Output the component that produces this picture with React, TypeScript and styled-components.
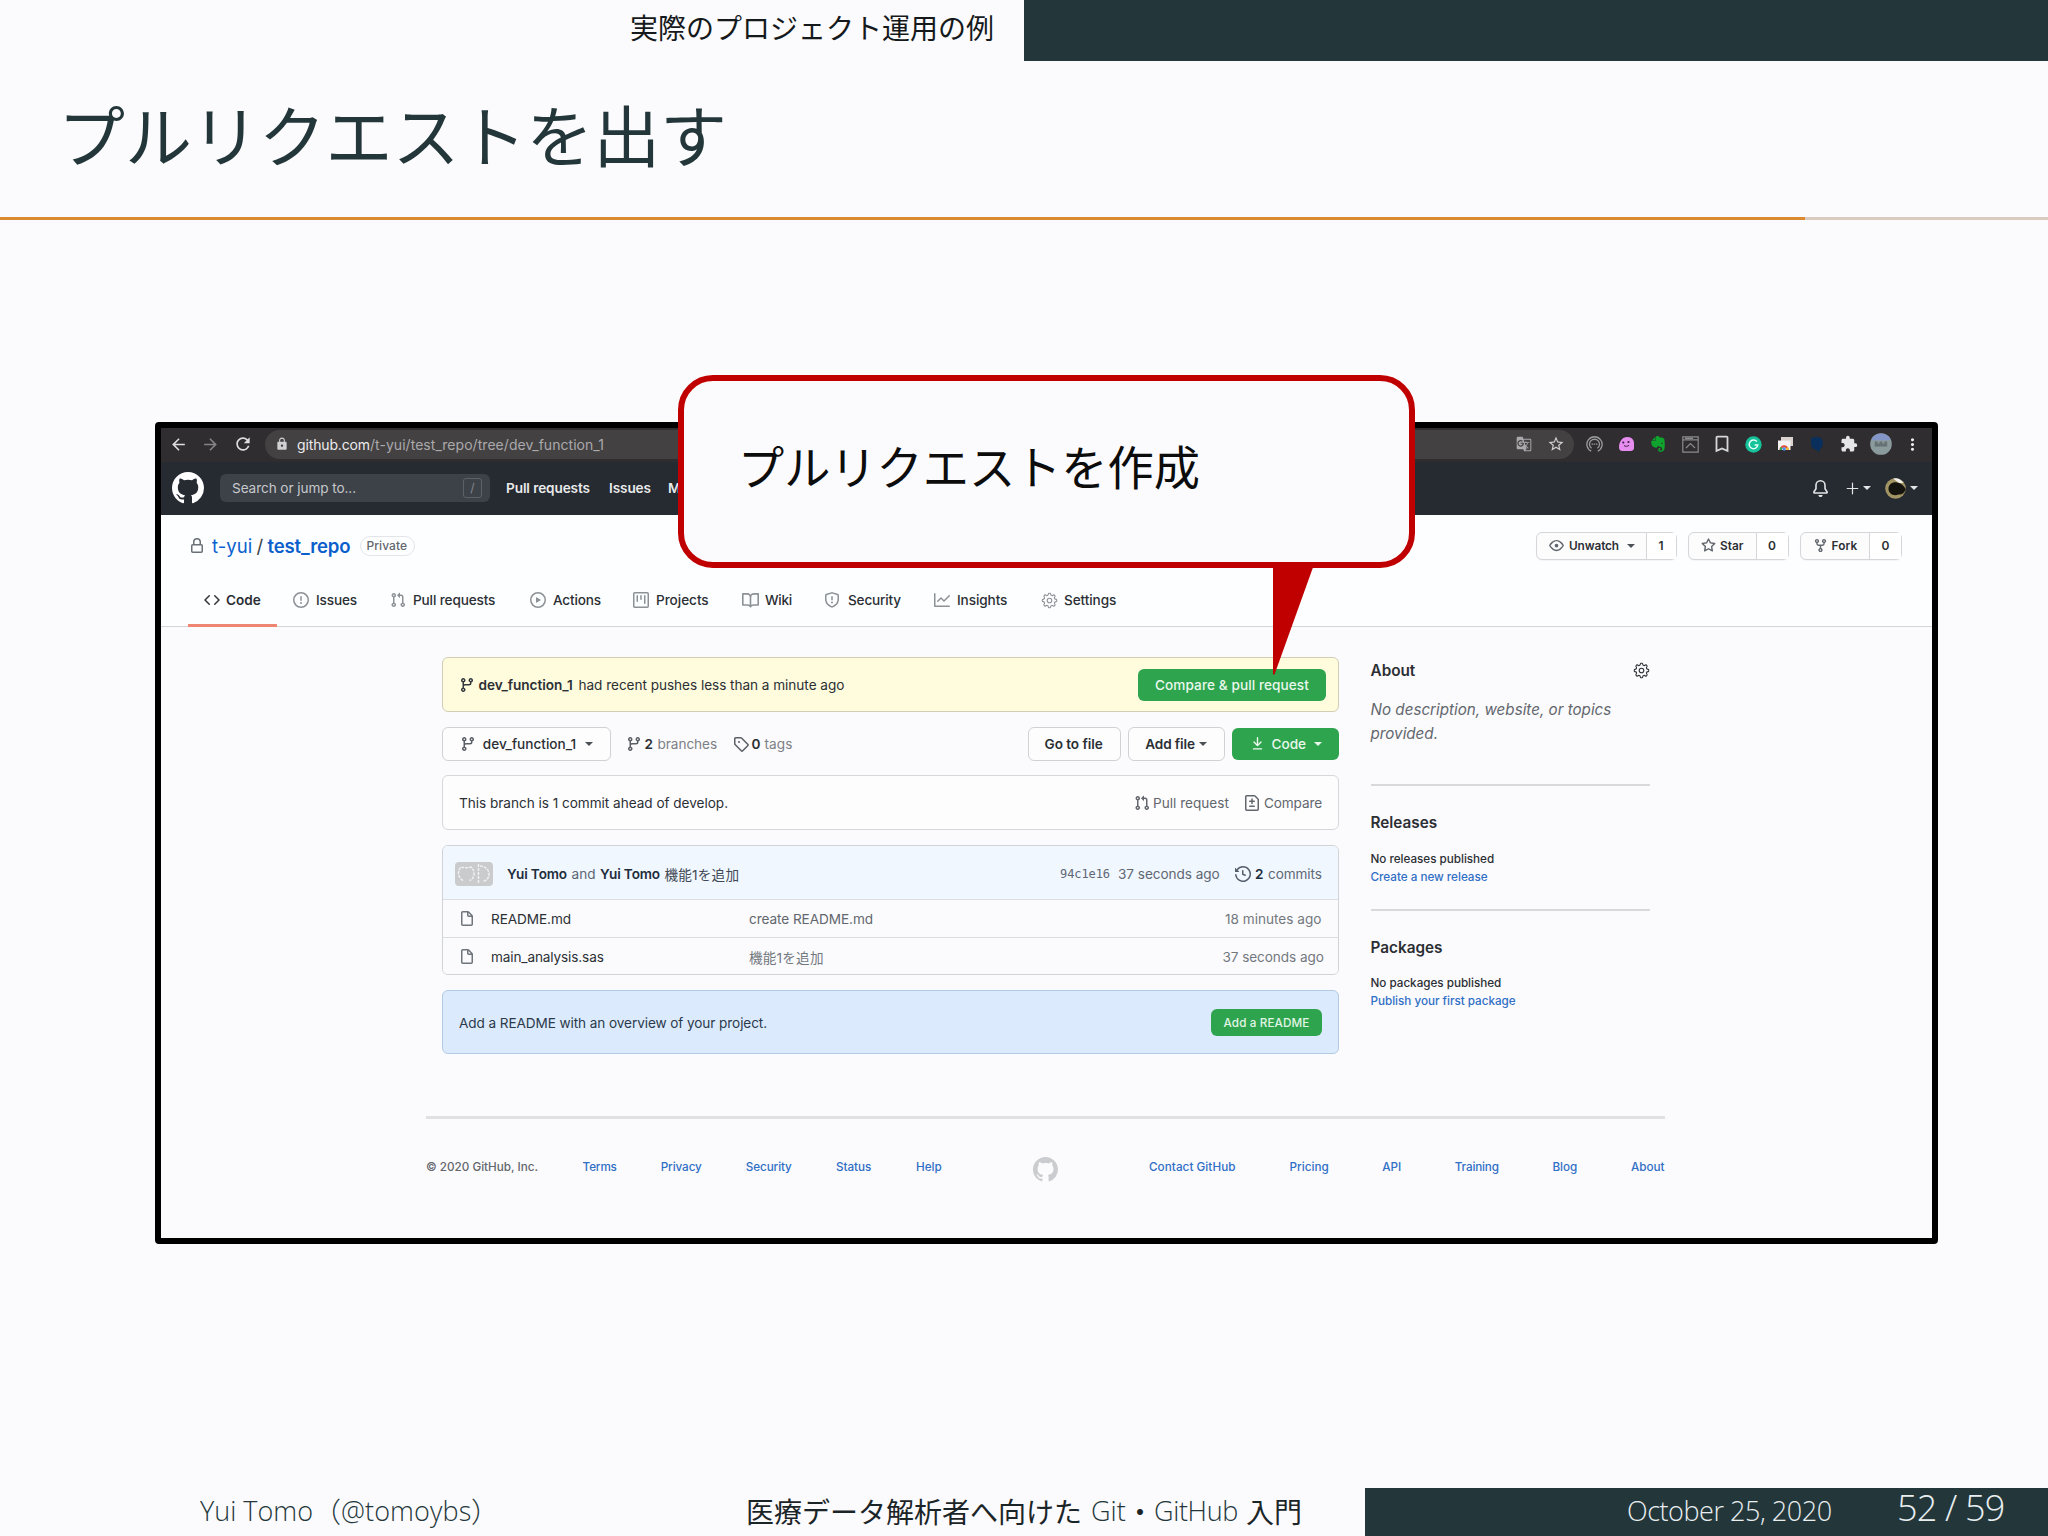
import React from "react";
import styled, { createGlobalStyle } from "styled-components";
import { GoGear } from "react-icons/go";
import { MdArrowBack, MdArrowForward, MdRefresh, MdLock, MdStarBorder, MdBookmarkBorder, MdExtension, MdMoreVert, MdGTranslate } from "react-icons/md";
import { SiEvernote } from "react-icons/si";

const Global = createGlobalStyle`
  * { box-sizing: border-box; }
  body { margin: 0; background: #fbfafc; }
`;

const ui = `Inter, "Noto Sans CJK JP", sans-serif`;
const slide = `"Open Sans", "Noto Sans CJK JP", sans-serif`;

const Slide = styled.div`
  position: relative;
  width: 2048px;
  height: 1536px;
  overflow: hidden;
  background: #fbfafc;
  display: flex;
  flex-direction: column;
  font-family: ${slide};
`;
const T = styled.span<{ $w: number; $s?: number; $c?: string; $b?: number; $ml?: number; $ls?: number; $f?: string }>`
  display: block;
  flex: none;
  white-space: nowrap;
  width: ${(p) => p.$w}px;
  font-size: ${(p) => p.$s ?? 13.6}px;
  color: ${(p) => p.$c ?? "#2b2f34"};
  font-weight: ${(p) => p.$b ?? 400};
  margin-left: ${(p) => p.$ml ?? 0}px;
  letter-spacing: ${(p) => p.$ls ?? 0}px;
  ${(p) => (p.$f ? `font-family: ${p.$f};` : "")}
`;

const TopStrip = styled.header`
  display: flex;
  height: 61px;
`;
const TopLeft = styled.div`
  width: 1024px;
  display: flex;
  align-items: center;
  justify-content: flex-end;
  padding: 0 30px 7px 0;
`;
const TopRight = styled.div`
  flex: 1;
  background: #23373b;
`;
const TitleRow = styled.div`
  height: 156px;
  padding: 0 0 13px 58px;
  display: flex;
  align-items: center;
`;
const Progress = styled.div`
  height: 3px;
  background: #d9cbbd;
`;
const ProgressDone = styled.div`
  width: 1805px;
  height: 3px;
  background: #dc8a2f;
`;

const Frame = styled.section`
  margin: 202px 0 0 155px;
  width: 1783px;
  height: 822px;
  border: 6px solid #000;
  border-radius: 4px;
  display: flex;
  flex-direction: column;
  background: #fbfafc;
  font-family: ${ui};
`;
const Chrome = styled.div`
  height: 34px;
  background: #2f2d2f;
  display: flex;
  align-items: center;
  padding-bottom: 2px;
`;
const Nav = styled.div`
  width: 104px;
  display: flex;
  align-items: center;
  padding-left: 8px;
  gap: 13px;
  color: #dedddf;
`;
const Url = styled.div`
  width: 1309px;
  height: 29px;
  border-radius: 15px;
  background: #434142;
  display: flex;
  align-items: center;
  padding: 0 9px 0 10px;
  color: #d0cfd1;
`;
const UrlActions = styled.div`
  display: flex;
  align-items: center;
  gap: 15px;
  margin-left: auto;
`;
const Spacer = styled.div`
  flex: 1;
`;
const ExtCell = styled.div`
  width: 31.75px;
  display: flex;
  justify-content: center;
  align-items: center;
  color: #d6d5d7;
`;
const ExtList = styled.div`
  display: flex;
  padding-left: 5px;
`;

const HubBar = styled.div`
  height: 53px;
  background: #262a31;
  display: flex;
  align-items: center;
  padding-left: 11px;
  padding-bottom: 1px;
`;
const Search = styled.div`
  width: 270px;
  height: 28px;
  margin-left: 16px;
  border-radius: 6px;
  background: #3d4148;
  display: flex;
  align-items: center;
  padding: 0 8px 0 12px;
`;
const Slash = styled.div`
  width: 19px;
  height: 20px;
  border: 1px solid #5d6168;
  border-radius: 3px;
  color: #84888e;
  font-size: 12px;
  line-height: 18px;
  text-align: center;
`;
const HubRight = styled.div`
  margin-left: auto;
  display: flex;
  align-items: center;
  padding-right: 14px;
`;
const Caret = styled.i<{ $c?: string; $ml?: number }>`
  flex: none;
  margin-left: ${(p) => p.$ml ?? 0}px;
  border: 4.5px solid transparent;
  border-top-color: ${(p) => p.$c ?? "#4c5157"};
  border-bottom: 0;
`;

const RepoHead = styled.div`
  height: 111.5px;
  background: #fdfeff;
  border-bottom: 1.5px solid #d5d6d9;
  display: flex;
  flex-direction: column;
  justify-content: space-between;
`;
const RepoLine = styled.div`
  display: flex;
  align-items: center;
  height: 63px;
  padding: 0 30px 0 28px;
`;
const Pill = styled.div`
  height: 20px;
  width: 55px;
  margin-left: 9px;
  border: 1.5px solid #e4e5e8;
  border-radius: 11px;
  display: flex;
  align-items: center;
  justify-content: center;
`;
const SplitButton = styled.div<{ $w: number; $n: number; $ml?: number }>`
  width: ${(p) => p.$w}px;
  height: 28px;
  margin-left: ${(p) => p.$ml ?? 11}px;
  border: 1.5px solid #d5d6d9;
  border-radius: 6px;
  background: #fcfcfd;
  display: flex;
  box-shadow: 0 1px 1px rgba(0, 0, 0, 0.04);
  > div:last-child {
    width: ${(p) => p.$n}px;
    border-left: 1.5px solid #d5d6d9;
    justify-content: center;
    background: #fff;
  }
`;
const SplitPart = styled.div<{ $pl?: number }>`
  display: flex;
  align-items: center;
  flex: 1 0 auto;
  padding-left: ${(p) => p.$pl ?? 0}px;
  &:last-child {
    flex: none;
  }
`;
const Tabs = styled.div`
  display: flex;
  height: 49px;
  padding-left: 27px;
`;
const Tab = styled.div<{ $on?: boolean; $w: number }>`
  flex: none;
  width: ${(p) => p.$w}px;
  display: flex;
  align-items: center;
  height: 50px;
  padding-bottom: ${(p) => (p.$on ? 0 : 3)}px;
  padding-left: ${(p) => (p.$on ? 16 : 0)}px;
  margin-right: ${(p) => (p.$on ? 16 : 0)}px;
  border-bottom: ${(p) => (p.$on ? "3px solid #ee8672" : "0")};
  color: #8c9196;
`;

const Body = styled.div`
  display: flex;
  padding: 30.5px 0 0 281px;
  height: 489px;
`;
const Main = styled.div`
  width: 897px;
  display: flex;
  flex-direction: column;
`;
const Box = styled.div<{ $h: number; $bg?: string; $bd?: string; $pr?: number; $pt?: number }>`
  height: ${(p) => p.$h}px;
  border: 1.5px solid ${(p) => p.$bd ?? "#d5d7db"};
  border-radius: 6px;
  background: ${(p) => p.$bg ?? "#fdfdfe"};
  display: flex;
  align-items: center;
  padding: ${(p) => p.$pt ?? 0}px ${(p) => p.$pr ?? 16}px 0 16px;
`;
const Green = styled.div<{ $w: number; $h: number; $ml?: number }>`
  width: ${(p) => p.$w}px;
  height: ${(p) => p.$h}px;
  margin-left: ${(p) => p.$ml ?? 0}px;
  border-radius: 6px;
  background: #2ea44f;
  display: flex;
  align-items: center;
  justify-content: center;
  color: #eefaf0;
`;
const White = styled.div<{ $w: number; $ml?: number }>`
  width: ${(p) => p.$w}px;
  height: 33.5px;
  margin-left: ${(p) => p.$ml ?? 0}px;
  border-radius: 6px;
  border: 1.5px solid #d0d1d5;
  background: #fdfdfe;
  display: flex;
  align-items: center;
  justify-content: center;
  color: #5a5f65;
`;
const ActionRow = styled.div`
  display: flex;
  align-items: center;
  height: 33.5px;
  margin: 15px 0 14px;
  color: #5a5f65;
`;
const Files = styled.div`
  margin: 15px 0 15px;
  border: 1.5px solid #d0d3d7;
  border-radius: 6px;
  overflow: hidden;
`;
const CommitRow = styled.div`
  height: 53px;
  padding: 2px 16px 0 12px;
  background: #f0f7ff;
  display: flex;
  align-items: center;
  color: #555f6b;
`;
const FileRow = styled.div`
  height: 37.5px;
  padding: 1.5px 0 0 16px;
  border-top: 1.5px solid #dcdee1;
  background: #fbfbfd;
  display: flex;
  align-items: center;
  color: #6f757b;
`;
const Avatars = styled.div`
  width: 38px;
  height: 24px;
  border-radius: 4px;
  background: #c9cbcc;
  overflow: hidden;
`;

const Side = styled.aside`
  width: 279.5px;
  margin-left: 31.5px;
  display: flex;
  flex-direction: column;
`;
const SideHead = styled.div<{ $h: number }>`
  height: ${(p) => p.$h}px;
  display: flex;
  align-items: center;
  justify-content: space-between;
  color: #2b2f34;
`;
const Description = styled.div`
  margin-top: 14px;
  line-height: 24px;
  font-style: italic;
`;
const SideLines = styled.div`
  margin-top: 15px;
  line-height: 18px;
`;
const Rule = styled.div<{ $mt: number }>`
  height: 2px;
  background: #d9d9dc;
  margin: ${(p) => p.$mt}px 0 24px;
`;
const HubFooter = styled.footer`
  width: 1239px;
  margin-left: 265px;
  border-top: 3px solid #e1e1e4;
  height: 100px;
  display: flex;
  align-items: center;
  justify-content: space-between;
  color: #cbcccf;
`;
const Links = styled.div<{ $w: number }>`
  width: ${(p) => p.$w}px;
  display: flex;
  justify-content: space-between;
`;
const MarkWrap = styled.div`
  display: flex;
  padding-top: 4px;
`;

const Callout = styled.div`
  position: absolute;
  left: 678px;
  top: 375px;
  width: 737px;
  height: 193px;
  border: 6px solid #c00000;
  border-radius: 35px;
  background: #fbfafc;
  display: flex;
  align-items: center;
  padding: 0 0 14px 54px;
`;
const Tail = styled.svg`
  position: absolute;
  left: 1273px;
  top: 566px;
`;

const Foot = styled.footer`
  margin-top: auto;
  height: 48px;
  display: flex;
`;
const FootLeft = styled.div`
  width: 1365px;
  display: flex;
  align-items: center;
  padding: 0 0 3px 200px;
`;
const FootRight = styled.div`
  flex: 1;
  height: 48px;
  background: #23373b;
  display: flex;
  align-items: baseline;
  padding-left: 262px;
  line-height: 40px;
`;

const P: Record<string, string> = {
  mark: "M8 0C3.58 0 0 3.58 0 8c0 3.54 2.29 6.53 5.47 7.59.4.07.55-.17.55-.38 0-.19-.01-.82-.01-1.49-2.01.37-2.53-.49-2.69-.94-.09-.23-.48-.94-.82-1.13-.28-.15-.68-.52-.01-.53.63-.01 1.08.58 1.23.82.72 1.21 1.87.87 2.33.66.07-.52.28-.87.51-1.07-1.78-.2-3.64-.89-3.64-3.95 0-.87.31-1.59.82-2.15-.08-.2-.36-1.02.08-2.12 0 0 .67-.21 2.2.82.64-.18 1.32-.27 2-.27.68 0 1.36.09 2 .27 1.53-1.04 2.2-.82 2.2-.82.44 1.1.16 1.92.08 2.12.51.56.82 1.27.82 2.15 0 3.07-1.87 3.75-3.65 3.95.29.25.54.73.54 1.48 0 1.07-.01 1.93-.01 2.2 0 .21.15.46.55.38A8.013 8.013 0 0016 8c0-4.42-3.58-8-8-8z",
  branch: "M11.75 2.5a.75.75 0 100 1.5.75.75 0 000-1.5zm-2.25.75a2.25 2.25 0 113 2.122V6A2.5 2.5 0 0110 8.5H6a1 1 0 00-1 1v1.128a2.251 2.251 0 11-1.5 0V5.372a2.25 2.25 0 111.5 0v1.836A2.492 2.492 0 016 7h4a1 1 0 001-1v-.628A2.25 2.25 0 019.5 3.25zM4.25 12a.75.75 0 100 1.5.75.75 0 000-1.5zM3.5 3.25a.75.75 0 111.5 0 .75.75 0 01-1.5 0z",
  pr: "M7.177 3.073L9.573.677A.25.25 0 0110 .854v4.792a.25.25 0 01-.427.177L7.177 3.427a.25.25 0 010-.354zM3.75 2.5a.75.75 0 100 1.5.75.75 0 000-1.5zm-2.25.75a2.25 2.25 0 113 2.122v5.256a2.251 2.251 0 11-1.5 0V5.372A2.25 2.25 0 011.5 3.25zM11 2.5h-1V4h1a1 1 0 011 1v5.628a2.251 2.251 0 101.5 0V5A2.5 2.5 0 0011 2.5zm1 10.25a.75.75 0 111.5 0 .75.75 0 01-1.5 0zM3.75 12a.75.75 0 100 1.5.75.75 0 000-1.5z",
  fork: "M5 3.25a.75.75 0 11-1.5 0 .75.75 0 011.5 0zm0 2.122a2.25 2.25 0 10-1.5 0v.878A2.25 2.25 0 005.75 8.5h1.5v2.128a2.251 2.251 0 101.5 0V8.5h1.5a2.25 2.25 0 002.25-2.25v-.878a2.25 2.25 0 10-1.5 0v.878a.75.75 0 01-.75.75h-4.5A.75.75 0 015 6.25v-.878zm3.75 7.378a.75.75 0 11-1.5 0 .75.75 0 011.5 0zm3-8.75a.75.75 0 100-1.5.75.75 0 000 1.5z",
  code: "M4.72 3.22a.75.75 0 011.06 1.06L2.06 8l3.72 3.72a.75.75 0 11-1.06 1.06L.47 8.53a.75.75 0 010-1.06l4.25-4.25zm6.56 0a.75.75 0 10-1.06 1.06L13.94 8l-3.72 3.72a.75.75 0 101.06 1.06l4.25-4.25a.75.75 0 000-1.06l-4.25-4.25z",
  issue: "M8 1.5a6.5 6.5 0 100 13 6.5 6.5 0 000-13zM0 8a8 8 0 1116 0A8 8 0 010 8zm9 3a1 1 0 11-2 0 1 1 0 012 0zm-.25-6.25a.75.75 0 00-1.5 0v3.5a.75.75 0 001.5 0v-3.5z",
  play: "M1.5 8a6.5 6.5 0 1113 0 6.5 6.5 0 01-13 0zM8 0a8 8 0 100 16A8 8 0 008 0zM6.379 5.227A.25.25 0 006 5.442v5.117a.25.25 0 00.379.214l4.264-2.559a.25.25 0 000-.428L6.379 5.227z",
  project: "M1.75 0A1.75 1.75 0 000 1.75v12.5C0 15.216.784 16 1.75 16h12.5A1.75 1.75 0 0016 14.25V1.75A1.75 1.75 0 0014.25 0H1.75zM1.5 1.75a.25.25 0 01.25-.25h12.5a.25.25 0 01.25.25v12.5a.25.25 0 01-.25.25H1.75a.25.25 0 01-.25-.25V1.75zM11.75 3a.75.75 0 00-.75.75v7.5a.75.75 0 001.5 0v-7.5a.75.75 0 00-.75-.75zm-8.25.75a.75.75 0 011.5 0v5.5a.75.75 0 01-1.5 0v-5.5zM8 3a.75.75 0 00-.75.75v3.5a.75.75 0 001.5 0v-3.5A.75.75 0 008 3z",
  book: "M0 1.75A.75.75 0 01.75 1h4.253c1.227 0 2.317.59 3 1.501A3.744 3.744 0 0111.006 1h4.245a.75.75 0 01.75.75v10.5a.75.75 0 01-.75.75h-4.507a2.25 2.25 0 00-1.591.659l-.622.621a.75.75 0 01-1.06 0l-.622-.621A2.25 2.25 0 005.258 13H.75a.75.75 0 01-.75-.75V1.75zm8.755 3a2.25 2.25 0 012.25-2.25H14.5v9h-3.757c-.71 0-1.4.201-1.992.572l.004-7.322zm-1.504 7.324l.004-5.073-.002-2.253A2.25 2.25 0 005.003 2.5H1.5v9h3.757a3.75 3.75 0 011.994.574z",
  shield: "M7.467.133a1.75 1.75 0 011.066 0l5.25 1.68A1.75 1.75 0 0115 3.48V7c0 1.566-.32 3.182-1.303 4.682-.983 1.498-2.585 2.813-5.032 3.855a1.7 1.7 0 01-1.33 0c-2.447-1.042-4.049-2.357-5.032-3.855C1.32 10.182 1 8.566 1 7V3.48a1.75 1.75 0 011.217-1.667l5.25-1.68zm.61 1.429a.25.25 0 00-.153 0l-5.25 1.68a.25.25 0 00-.174.238V7c0 1.358.275 2.666 1.057 3.86.784 1.194 2.121 2.34 4.366 3.297a.2.2 0 00.154 0c2.245-.956 3.582-2.104 4.366-3.298C13.225 9.666 13.5 8.36 13.5 7V3.48a.25.25 0 00-.174-.237l-5.25-1.68zM9 10.5a1 1 0 11-2 0 1 1 0 012 0zm-.25-5.75a.75.75 0 10-1.5 0v3a.75.75 0 001.5 0v-3z",
  graph: "M1.5 1.75a.75.75 0 00-1.5 0v12.5c0 .414.336.75.75.75h14.5a.75.75 0 000-1.5H1.5V1.75zm14.28 2.53a.75.75 0 00-1.06-1.06L10 7.94 7.53 5.47a.75.75 0 00-1.06 0L3.22 8.72a.75.75 0 001.06 1.06L7 7.06l2.47 2.47a.75.75 0 001.06 0l5.25-5.25z",
  eye: "M1.679 7.932c.412-.621 1.242-1.75 2.366-2.717C5.175 4.242 6.527 3.5 8 3.5c1.473 0 2.824.742 3.955 1.715 1.124.967 1.954 2.096 2.366 2.717a.119.119 0 010 .136c-.412.621-1.242 1.75-2.366 2.717C10.825 11.758 9.473 12.5 8 12.5c-1.473 0-2.824-.742-3.955-1.715C2.92 9.818 2.09 8.69 1.679 8.068a.119.119 0 010-.136zM8 2c-1.981 0-3.67.992-4.933 2.078C1.797 5.169.88 6.423.43 7.1a1.619 1.619 0 000 1.798c.45.678 1.367 1.932 2.637 3.024C4.329 13.008 6.019 14 8 14c1.981 0 3.67-.992 4.933-2.078 1.27-1.091 2.187-2.345 2.637-3.023a1.619 1.619 0 000-1.798c-.45-.678-1.367-1.932-2.637-3.023C11.671 2.992 9.981 2 8 2zm0 8a2 2 0 100-4 2 2 0 000 4z",
  star: "M8 .25a.75.75 0 01.673.418l1.882 3.815 4.21.612a.75.75 0 01.416 1.279l-3.046 2.97.719 4.192a.75.75 0 01-1.088.791L8 12.347l-3.766 1.98a.75.75 0 01-1.088-.79l.72-4.194L.818 6.374a.75.75 0 01.416-1.28l4.21-.611L7.327.668A.75.75 0 018 .25zm0 2.445L6.615 5.5a.75.75 0 01-.564.41l-3.097.45 2.24 2.184a.75.75 0 01.216.664l-.528 3.084 2.769-1.456a.75.75 0 01.698 0l2.77 1.456-.53-3.084a.75.75 0 01.216-.664l2.24-2.183-3.096-.45a.75.75 0 01-.564-.41L8 2.694v.001z",
  tag: "M2.5 7.775V2.75a.25.25 0 01.25-.25h5.025a.25.25 0 01.177.073l6.25 6.25a.25.25 0 010 .354l-5.025 5.025a.25.25 0 01-.354 0l-6.25-6.25a.25.25 0 01-.073-.177zm-1.5 0V2.75C1 1.784 1.784 1 2.75 1h5.025c.464 0 .91.184 1.238.513l6.25 6.25a1.75 1.75 0 010 2.474l-5.026 5.026a1.75 1.75 0 01-2.474 0l-6.25-6.25A1.75 1.75 0 011 7.775zM6 5a1 1 0 100 2 1 1 0 000-2z",
  history: "M1.643 3.143L.427 1.927A.25.25 0 000 2.104V5.75c0 .138.112.25.25.25h3.646a.25.25 0 00.177-.427L2.715 4.215a6.5 6.5 0 11-1.18 4.458.75.75 0 10-1.493.154 8.001 8.001 0 101.6-5.684zM7.75 4a.75.75 0 01.75.75v2.992l2.028.812a.75.75 0 01-.557 1.392l-2.5-1A.75.75 0 017 8.25v-3.5A.75.75 0 017.75 4z",
  file: "M3.75 1.5a.25.25 0 00-.25.25v11.5c0 .138.112.25.25.25h8.5a.25.25 0 00.25-.25V6H9.75A1.75 1.75 0 018 4.25V1.5H3.75zm5.75.56v2.19c0 .138.112.25.25.25h2.19L9.5 2.06zM2 1.75C2 .784 2.784 0 3.75 0h5.086c.464 0 .909.184 1.237.513l3.414 3.414c.329.328.513.773.513 1.237v8.086A1.75 1.75 0 0112.25 15h-8.5A1.75 1.75 0 012 13.25V1.75z",
  diff: "M2.75 1.5a.25.25 0 00-.25.25v12.5c0 .138.112.25.25.25h10.5a.25.25 0 00.25-.25V4.664a.25.25 0 00-.073-.177l-2.914-2.914a.25.25 0 00-.177-.073H2.75zM1 1.75C1 .784 1.784 0 2.75 0h7.586c.464 0 .909.184 1.237.513l2.914 2.914c.329.328.513.773.513 1.237v9.586A1.75 1.75 0 0113.25 16H2.75A1.75 1.75 0 011 14.25V1.75zm7 1.5a.75.75 0 01.75.75v1.5h1.5a.75.75 0 010 1.5h-1.5v1.5a.75.75 0 01-1.5 0V7h-1.5a.75.75 0 010-1.5h1.5V4A.75.75 0 018 3.25zm-3 8a.75.75 0 01.75-.75h4.5a.75.75 0 010 1.5h-4.5a.75.75 0 01-.75-.75z",
  download: "M7.47 10.78a.75.75 0 001.06 0l3.75-3.75a.75.75 0 00-1.06-1.06L8.75 8.44V1.75a.75.75 0 00-1.5 0v6.69L4.78 5.97a.75.75 0 00-1.06 1.06l3.75 3.75zM3.75 13a.75.75 0 000 1.5h8.5a.75.75 0 000-1.5h-8.5z",
  bell: "M8 16a2 2 0 001.985-1.75c.017-.137-.097-.25-.235-.25h-3.5c-.138 0-.252.113-.235.25A2 2 0 008 16zM8 1.5A3.5 3.5 0 004.5 5v2.947c0 .346-.102.683-.294.97L2.49 11.5h11.02l-1.716-2.583a1.75 1.75 0 01-.294-.97V5A3.5 3.5 0 008 1.5zM3 5a5 5 0 0110 0v2.947c0 .05.015.098.042.139l1.703 2.555A1.518 1.518 0 0113.482 13H2.518a1.518 1.518 0 01-1.263-2.36l1.703-2.554A.25.25 0 003 7.947V5z",
  plus: "M7.25 1.5a.75.75 0 011.5 0v5.75h5.75a.75.75 0 010 1.5H8.75v5.75a.75.75 0 01-1.5 0V8.75H1.5a.75.75 0 010-1.5h5.75V1.5z",
  lock: "M4 4v2h-.25A1.75 1.75 0 002 7.75v5.5c0 .966.784 1.75 1.75 1.75h8.5A1.75 1.75 0 0014 13.25v-5.5A1.75 1.75 0 0012.25 6H12V4a4 4 0 10-8 0zm6.5 2V4a2.5 2.5 0 10-5 0v2h5zM12 7.5h.25a.25.25 0 01.25.25v5.5a.25.25 0 01-.25.25h-8.5a.25.25 0 01-.25-.25v-5.5a.25.25 0 01.25-.25H12z",
};

const IconSvg = styled.svg<{ $ml?: number }>`
  flex: none;
  display: block;
  margin-left: ${(p) => p.$ml ?? 0}px;
`;
const Oct = ({ n, s = 16, ml, c }: { n: string; s?: number; ml?: number; c?: string }) => (
  <IconSvg $ml={ml} width={s} height={s} viewBox="0 0 16 16" fill={c ?? "currentColor"} fillRule="evenodd">
    <path d={P[n]} />
  </IconSvg>
);

const Extensions = () => (
  <ExtList>
    <ExtCell>
      <svg width="17" height="17" viewBox="0 0 17 17" fill="none" stroke="#9b9a9d" strokeWidth="1.3">
        <path d="M5.2 15.2a7.6 7.6 0 116.6 0M5.6 12.3a5 5 0 115.8 0" />
        <path d="M5.6 8.2h1.4M7.8 8.2h1.4M10 8.2h1.4" />
      </svg>
    </ExtCell>
    <ExtCell>
      <svg width="17" height="16" viewBox="0 0 17 16">
        <path d="M1 11C1 6 4 1 9.500 1 14 1 16 4 16 7.500V12c0 2-1.500 3-3.500 3h-8C2 15 1 13.500 1 11z" fill="#e88df0" />
        <circle cx="5.300" cy="6.500" r="1.100" fill="#3a2040" />
        <circle cx="10.500" cy="6" r="1.100" fill="#3a2040" />
        <path d="M6 9.600c1.500 1 3.500 1 5-.300" stroke="#3a2040" fill="none" />
      </svg>
    </ExtCell>
    <ExtCell><SiEvernote size={16} color="#0fa42d" /></ExtCell>
    <ExtCell>
      <svg width="17" height="17" viewBox="0 0 17 17" fill="none" stroke="#8b8a8d" strokeWidth="1.2">
        <path d="M.8.8h15.400v15.400H.8zM1 3.800h15M3 2.300h8M4 12l4.500-4.500L13 12" />
      </svg>
    </ExtCell>
    <ExtCell><MdBookmarkBorder size={22} /></ExtCell>
    <ExtCell>
      <svg width="17" height="17" viewBox="0 0 17 17">
        <circle cx="8.500" cy="8.500" r="8.200" fill="#15c39a" />
        <path d="M11.800 5.600A4.300 4.300 0 1012.800 9H9.600" fill="none" stroke="#e6fff8" strokeWidth="1.500" />
      </svg>
    </ExtCell>
    <ExtCell>
      <svg width="17" height="16" viewBox="0 0 17 16">
        <path d="M4 1h12v9H4z" fill="#d9d2cf" />
        <path d="M1 4.500h12.500V14H1z" fill="#f4f2f2" />
        <path d="M2.500 14a4.700 4.700 0 019.400 0H9.600a2.400 2.400 0 00-4.800 0z" fill="#e0503f" />
        <path d="M2.500 14a4.700 4.700 0 011.200-3.100l2 1.600-.900 1.500z" fill="#37a753" />
        <path d="M10.700 10.900A4.700 4.700 0 0111.900 14H9.600l-.800-1.600z" fill="#f5c02e" />
        <circle cx="7.200" cy="13" r="1.700" fill="#4e8ef0" />
      </svg>
    </ExtCell>
    <ExtCell>
      <svg width="14" height="17" viewBox="0 0 14 17">
        <path d="M7 1c3.500 0 6 2 6 5.500S11 13 9.500 13.500V16.500L6 13.800C3 13 1 10.500 1 7V2.500C2.500 1.300 4.500 1 7 1z" fill="#0b2f5c" />
      </svg>
    </ExtCell>
    <ExtCell><MdExtension size={18} color="#e6e5e7" /></ExtCell>
    <ExtCell>
      <svg width="22" height="22" viewBox="0 0 23 23">
        <circle cx="11.500" cy="11.500" r="11.300" fill="#8b9a9d" />
        <path d="M2.200 5.500a11.300 11.300 0 0118.600 0L21 7.500H2z" fill="#8496c8" />
        <path d="M5 9h3v2h2V9h3v2h2V9h3v5H5z" fill="#4c5658" opacity=".6" />
      </svg>
    </ExtCell>
    <ExtCell><MdMoreVert size={19} color="#eeeeef" /></ExtCell>
  </ExtList>
);

const link = "#2f6fc6";
const muted = "#62676d";

const Small = (p: { w: number; ls?: number; c?: string; children: React.ReactNode }) => (
  <T $w={p.w} $s={11.7} $b={500} $ls={p.ls} $c={p.c}>{p.children}</T>
);

export default function App() {
  return (
    <Slide>
      <Global />
      <TopStrip>
        <TopLeft><T $w={364} $s={28} $c="#15191b">実際のプロジェクト運用の例</T></TopLeft>
        <TopRight />
      </TopStrip>
      <TitleRow><T $w={674} $s={67} $ls={-0.1} $c="#23373b">プルリクエストを出す</T></TitleRow>
      <Progress><ProgressDone /></Progress>

      <Frame>
        <Chrome>
          <Nav>
            <MdArrowBack size={19} />
            <MdArrowForward size={19} color="#858487" />
            <MdRefresh size={20} />
          </Nav>
          <Url>
            <MdLock size={14} />
            <T $w={73} $s={14} $ml={8} $ls={-0.14} $c="#ececed">github.com</T>
            <T $w={234} $s={14} $ls={0.04} $c="#aaa9ac">/t-yui/test_repo/tree/dev_function_1</T>
            <UrlActions>
              <MdGTranslate size={16} color="#a9a8aa" />
              <MdStarBorder size={18} />
            </UrlActions>
          </Url>
          <Extensions />
        </Chrome>

        <HubBar>
          <Oct n="mark" s={32} c="#fff" />
          <Search>
            <T $w={124} $ls={-0.08} $c="#c5c8cc">Search or jump to...</T>
            <Spacer />
            <Slash>/</Slash>
          </Search>
          <T $w={87} $b={600} $ml={16} $ls={-0.1} $c="#e9eaeb">Pull requests</T>
          <T $w={43} $b={600} $ml={16} $ls={-0.1} $c="#e9eaeb">Issues</T>
          <T $w={11} $b={600} $ml={16} $c="#e9eaeb">M</T>
          <HubRight>
            <Oct n="bell" s={17} c="#e4e5e7" />
            <Oct n="plus" s={13} ml={17} c="#e4e5e7" />
            <Caret $c="#e4e5e7" $ml={4} />
            <IconSvg $ml={14} width="21" height="21" viewBox="0 0 21 21">
              <circle cx="10.500" cy="10.500" r="10.300" fill="#a39563" />
              <path d="M8 .500A10 10 0 0118.500 5L14 5z" fill="#f3f2ec" />
              <path d="M3.500 10C4 6 8 3.500 12 4.500c3 .500 5 1.500 6.500 3.500L20.800 11c-1.500 4-3.800 6-7.300 5.500C9 18.500 3 16 3.500 10z" fill="#15140f" />
            </IconSvg>
            <Caret $c="#e4e5e7" $ml={4} />
          </HubRight>
        </HubBar>

        <RepoHead>
          <RepoLine>
            <Oct n="lock" s={16} c="#6a7076" />
            <T $w={40} $s={18.6} $ml={7} $c="#0b62cf">t-yui</T>
            <T $w={8} $s={18.6} $ml={4.500} $c="#3c4147">/</T>
            <T $w={83} $s={18.6} $b={600} $ml={3} $ls={-0.16} $c="#0b5fcb">test_repo</T>
            <Pill><T $w={41} $s={12} $b={500} $ls={0.05} $c={muted}>Private</T></Pill>
            <Spacer />
            <SplitButton $w={141} $n={30}>
              <SplitPart $pl={12}>
                <Oct n="eye" s={15} c="#62676d" />
                <T $w={50} $s={11.8} $b={600} $ml={5} $ls={-0.1}>Unwatch</T>
                <Caret $ml={8} />
              </SplitPart>
              <SplitPart><T $w={6} $s={12} $b={600}>1</T></SplitPart>
            </SplitButton>
            <SplitButton $w={100.500} $n={32}>
              <SplitPart $pl={12}>
                <Oct n="star" s={15} c="#62676d" />
                <T $w={24} $s={11.8} $b={600} $ml={4}>Star</T>
              </SplitPart>
              <SplitPart><T $w={8} $s={12} $b={600}>0</T></SplitPart>
            </SplitButton>
            <SplitButton $w={102.500} $n={32}>
              <SplitPart $pl={12}>
                <Oct n="fork" s={15} c="#62676d" />
                <T $w={26} $s={11.8} $b={600} $ml={4} $ls={0.1}>Fork</T>
              </SplitPart>
              <SplitPart><T $w={8} $s={12} $b={600}>0</T></SplitPart>
            </SplitButton>
          </RepoLine>
          <Tabs>
            <Tab $on $w={89}><Oct n="code" c="#33383e" /><T $w={36} $b={600} $ml={6}>Code</T></Tab>
            <Tab $w={97}><Oct n="issue" /><T $w={41} $b={500} $ml={7} $ls={-0.14}>Issues</T></Tab>
            <Tab $w={140}><Oct n="pr" /><T $w={83} $b={500} $ml={7} $ls={-0.14}>Pull requests</T></Tab>
            <Tab $w={103}><Oct n="play" /><T $w={48} $b={500} $ml={7} $ls={-0.16}>Actions</T></Tab>
            <Tab $w={109}><Oct n="project" /><T $w={54} $b={500} $ml={7} $ls={-0.05}>Projects</T></Tab>
            <Tab $w={82}><Oct n="book" s={17} /><T $w={27} $b={500} $ml={6} $ls={-0.27}>Wiki</T></Tab>
            <Tab $w={110}><Oct n="shield" /><T $w={53} $b={500} $ml={8} $ls={-0.17}>Security</T></Tab>
            <Tab $w={107}><Oct n="graph" /><T $w={51} $b={500} $ml={7} $ls={-0.1}>Insights</T></Tab>
            <Tab $w={90}><GoGear size={17} /><T $w={54} $b={500} $ml={6} $ls={-0.1}>Settings</T></Tab>
          </Tabs>
        </RepoHead>

        <Body>
          <Main>
            <Box $h={55} $bg="#fffbdd" $bd="#d1ceb5" $pr={12}>
              <Oct n="branch" c="#33383e" />
              <T $w={96} $b={600} $ml={3.500} $ls={-0.05}>dev_function_1</T>
              <T $w={266} $ml={4} $ls={-0.04}>had recent pushes less than a minute ago</T>
              <Spacer />
              <Green $w={188} $h={32}><T $w={154} $b={500} $ls={0.08} $c="#e9f8ec">Compare &amp; pull request</T></Green>
            </Box>
            <ActionRow>
              <White $w={168.500}>
                <Oct n="branch" />
                <T $w={94} $b={500} $ml={7}>dev_function_1</T>
                <Caret $ml={8} />
              </White>
              <Oct n="branch" ml={15} />
              <T $w={8} $b={600} $ml={3}>2</T>
              <T $w={59} $ml={5} $ls={-0.05} $c="#7b8086">branches</T>
              <Oct n="tag" ml={16} />
              <T $w={9} $b={600} $ml={3}>0</T>
              <T $w={28} $ml={4} $ls={0.08} $c="#7b8086">tags</T>
              <Spacer />
              <White $w={93}><T $w={59} $b={600} $ls={-0.05}>Go to file</T></White>
              <White $w={97.500} $ml={7}><T $w={50} $b={600} $ls={-0.12}>Add file</T><Caret $ml={4} /></White>
              <Green $w={107} $h={32} $ml={7}>
                <Oct n="download" s={15} />
                <T $w={34} $b={500} $ml={7} $c="#e9f8ec">Code</T>
                <Caret $c="#e9f8ec" $ml={8} />
              </Green>
            </ActionRow>
            <Box $h={55.500} $pt={1.500}>
              <T $w={268} $ls={-0.03}>This branch is 1 commit ahead of develop.</T>
              <Spacer />
              <Oct n="pr" c={muted} />
              <T $w={76} $ml={3} $c={muted}>Pull request</T>
              <Oct n="diff" ml={15} c={muted} />
              <T $w={58} $ml={4} $ls={-0.13} $c={muted}>Compare</T>
            </Box>
            <Files>
              <CommitRow>
                <Avatars>
                  <svg width="38" height="24" viewBox="0 0 38 24" fill="none" stroke="#f1f2f2" strokeWidth="1.400">
                    <path d="M8 18.500a8 8 0 01-4.500-7C3.500 8 5 6 6 5c3 1 7 1 10 0 2 2 3 4 3 6.500 0 4-2 6-4.500 7M23.500 2v20M25 4c5 0 9 3.500 9 8s-3 7-6.500 7.500" strokeDasharray="3 1" />
                  </svg>
                </Avatars>
                <T $w={60} $b={600} $ml={14} $ls={-0.15} $c="#1f2c3b">Yui Tomo</T>
                <T $w={24} $ml={4.500} $c="#5c6773">and</T>
                <T $w={60} $b={600} $ml={4.500} $ls={-0.15} $c="#1f2c3b">Yui Tomo</T>
                <T $w={75} $ml={4.500} $ls={0.2} $c="#3f4854">機能1を追加</T>
                <Spacer />
                <T $w={50} $s={12} $ls={-0.08} $c="#5f6873" $f={`"DejaVu Sans Mono", monospace`}>94c1e16</T>
                <T $w={102} $ml={8} $ls={-0.05} $c="#5f6873">37 seconds ago</T>
                <Oct n="history" ml={15} />
                <T $w={8} $b={600} $ml={4} $c="#1f2c3b">2</T>
                <T $w={54} $ml={5} $ls={-0.1} $c="#5f6873">commits</T>
              </CommitRow>
              <FileRow>
                <Oct n="file" />
                <T $w={80} $ml={16} $ls={-0.08}>README.md</T>
                <T $w={124} $ml={178} $ls={-0.07} $c={muted}>create README.md</T>
                <T $w={97} $ml={352} $c="#73787e">18 minutes ago</T>
              </FileRow>
              <FileRow>
                <Oct n="file" />
                <T $w={113} $ml={16} $ls={-0.13}>main_analysis.sas</T>
                <T $w={75} $ml={145} $ls={0.2} $c="#73787e">機能1を追加</T>
                <T $w={101.500} $ml={398.500} $ls={-0.08} $c="#73787e">37 seconds ago</T>
              </FileRow>
            </Files>
            <Box $h={63.500} $bg="#dbebfd" $bd="#b2cae3" $pt={1.500}>
              <T $w={308} $ls={-0.09} $c="#2b3a4b">Add a README with an overview of your project.</T>
              <Spacer />
              <Green $w={111} $h={27}><T $w={86} $s={11.700} $b={500} $ls={0.12} $c="#e0f5e4">Add a README</T></Green>
            </Box>
          </Main>
          <Side>
            <SideHead $h={27}><T $w={45} $s={15.300} $b={600}>About</T><GoGear size={17} /></SideHead>
            <Description>
              <T $w={241} $s={15.200} $c={muted}>No description, website, or topics</T>
              <T $w={66} $s={15.200} $c={muted}>provided.</T>
            </Description>
            <Rule $mt={38} />
            <SideHead $h={25}><T $w={67} $s={15.300} $b={600}>Releases</T></SideHead>
            <SideLines>
              <Small w={124} ls={-0.02}>No releases published</Small>
              <Small w={117} ls={-0.02} c={link}>Create a new release</Small>
            </SideLines>
            <Rule $mt={23} />
            <SideHead $h={24}><T $w={72} $s={15.300} $b={600}>Packages</T></SideHead>
            <SideLines>
              <Small w={131} ls={-0.02}>No packages published</Small>
              <Small w={145} ls={-0.02} c={link}>Publish your first package</Small>
            </SideLines>
          </Side>
        </Body>

        <HubFooter>
          <Links $w={516}>
            <Small w={112.500} c={muted}>© 2020 GitHub, Inc.</Small>
            <Small w={34} ls={-0.15} c={link}>Terms</Small>
            <Small w={41} ls={-0.08} c={link}>Privacy</Small>
            <Small w={46} ls={-0.1} c={link}>Security</Small>
            <Small w={36} c={link}>Status</Small>
            <Small w={26} c={link}>Help</Small>
          </Links>
          <MarkWrap><Oct n="mark" s={25} /></MarkWrap>
          <Links $w={516}>
            <Small w={87} ls={0.05} c={link}>Contact GitHub</Small>
            <Small w={39} c={link}>Pricing</Small>
            <Small w={19} c={link}>API</Small>
            <Small w={44} ls={-0.15} c={link}>Training</Small>
            <Small w={25} c={link}>Blog</Small>
            <Small w={34} c={link}>About</Small>
          </Links>
        </HubFooter>
      </Frame>

      <Foot>
        <FootLeft>
          <T $w={113} $s={27} $b={300} $c="#23373b">Yui Tomo</T>
          <T $w={28} $s={28} $b={300} $c="#23373b">（</T>
          <T $w={130} $s={27} $b={300} $ls={0.1} $c="#23373b">@tomoybs</T>
          <T $w={28} $s={28} $b={300} $c="#23373b">）</T>
          <T $w={337} $s={28} $ml={247} $c="#1b2528">医療データ解析者へ向けた</T>
          <T $w={35} $s={27} $b={300} $ml={8} $c="#23373b">Git</T>
          <T $w={28} $s={28} $c="#1b2528">・</T>
          <T $w={84} $s={27} $b={300} $ls={-0.35} $c="#23373b">GitHub</T>
          <T $w={56} $s={28} $ml={8} $c="#1b2528">入門</T>
        </FootLeft>
        <FootRight>
          <T $w={205} $s={27} $b={300} $ls={-0.46} $c="#e9eef0">October 25, 2020</T>
          <T $w={108} $s={36} $b={300} $ml={65} $ls={-0.8} $c="#e9eef0">52 / 59</T>
        </FootRight>
      </Foot>

      <Callout><T $w={462} $s={46.200} $c="#0c0c0c">プルリクエストを作成</T></Callout>
      <Tail width="41" height="110" viewBox="0 0 41 110"><path d="M0 0H40.500L1.500 108.500H0z" fill="#c00000" /></Tail>
    </Slide>
  );
}
